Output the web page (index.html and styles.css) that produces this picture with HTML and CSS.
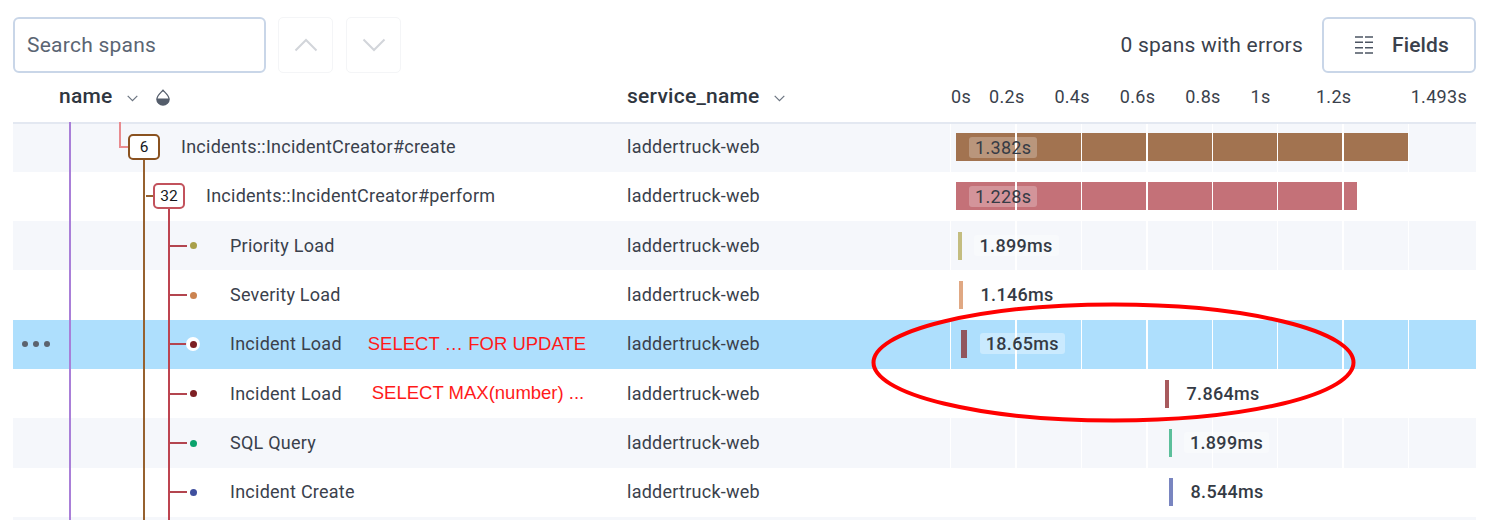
FILE: index.html
```html
<!DOCTYPE html>
<html lang="en">
<head>
<meta charset="utf-8">
<title>Trace spans</title>
<link rel="stylesheet" href="styles.css">
</head>
<body>
<div class="page">
  <div class="toolbar">
    <input class="search" type="text" placeholder="Search spans">
    <button class="nav-btn" aria-label="Previous"><svg width="24" height="14" viewBox="0 0 24 14"><path d="M1.5 12.5 12 2l10.500 10.500"/></svg></button>
    <button class="nav-btn" aria-label="Next"><svg width="24" height="14" viewBox="0 0 24 14"><path d="M1.500 1.500 12 12 22.500 1.500"/></svg></button>
    <span class="errors">0 spans with errors</span>
    <button class="fields-btn">
      <svg width="18" height="18" viewBox="0 0 18 18"><path d="M0 1h8M10 1h8M0 6.300h8M10 6.300h8M0 11.700h8M10 11.700h8M0 17h8M10 17h8"/></svg>
      <span>Fields</span>
    </button>
  </div>

  <div class="col-head">
    <div class="head-name">
      <span class="head-title">name</span>
      <svg class="sort" width="11" height="7" viewBox="0 0 11 7"><path d="M.7.8 5.500 5.600 10.300.8"/></svg>
      <svg class="drop" width="14" height="17" viewBox="0 0 14 17"><path class="drop-fill" d="M.8 9.500h12.400C13.400 13.500 10.500 16 7 16S.6 13.500.8 9.500z"/><path class="drop-line" d="M7 1.200C5 3.500.9 6.500.9 10.200.9 13.500 3.700 16 7 16s6.100-2.500 6.100-5.800C13.100 6.500 9 3.500 7 1.200z"/></svg>
    </div>
    <div class="head-service">
      <span class="head-title">service_name</span>
      <svg class="sort" width="11" height="7" viewBox="0 0 11 7"><path d="M.7.8 5.500 5.600 10.300.8"/></svg>
    </div>
    <div class="axis">
      <span>0s</span><span>0.2s</span><span>0.4s</span><span>0.6s</span><span>0.8s</span><span>1s</span><span>1.2s</span><span class="axis-end">1.493s</span>
    </div>
  </div>

  <div class="rows">
    <i class="guide guide-root"></i>
    <i class="guide guide-parent"></i>
    <i class="guide guide-brown"></i>
    <i class="guide guide-red"></i>

    <div class="row alt">
      <div class="name depth-0"><i class="stub stub-pink"></i><span class="count count-brown">6</span><span class="label label-group">Incidents::IncidentCreator#create</span></div>
      <div class="service">laddertruck-web</div>
      <div class="timeline"><div class="bar wide bar-brown" style="margin-left:6px;width:452px"><span class="chip">1.382s</span></div></div>
    </div>
    <div class="row">
      <div class="name depth-1"><i class="stub stub-brown"></i><span class="count count-red">32</span><span class="label label-group">Incidents::IncidentCreator#perform</span></div>
      <div class="service">laddertruck-web</div>
      <div class="timeline"><div class="bar wide bar-red" style="margin-left:6px;width:401px"><span class="chip">1.228s</span></div></div>
    </div>
    <div class="row alt">
      <div class="name depth-2"><i class="stub"></i><span class="dot-wrap"><i class="dot dot-olive"></i></span><span class="label">Priority Load</span></div>
      <div class="service">laddertruck-web</div>
      <div class="timeline"><div class="bar thin bar-olive" style="margin-left:8.300px"></div><span class="chip chip-time">1.899ms</span></div>
    </div>
    <div class="row">
      <div class="name depth-2"><i class="stub"></i><span class="dot-wrap"><i class="dot dot-orange"></i></span><span class="label">Severity Load</span></div>
      <div class="service">laddertruck-web</div>
      <div class="timeline"><div class="bar thin bar-orange" style="margin-left:9.300px"></div><span class="chip chip-time">1.146ms</span></div>
    </div>
    <div class="row selected">
      <div class="more"><i></i><i></i><i></i></div>
      <div class="name depth-2"><i class="stub"></i><span class="dot-wrap halo"><i class="dot dot-maroon"></i></span><span class="label">Incident Load</span><span class="note note-update">SELECT … FOR UPDATE</span></div>
      <div class="service">laddertruck-web</div>
      <div class="timeline"><div class="bar thick bar-maroon" style="margin-left:11px"></div><span class="chip chip-time">18.65ms</span></div>
    </div>
    <div class="row">
      <div class="name depth-2"><i class="stub"></i><span class="dot-wrap"><i class="dot dot-maroon"></i></span><span class="label">Incident Load</span><span class="note note-max">SELECT MAX(number) ...</span></div>
      <div class="service">laddertruck-web</div>
      <div class="timeline"><div class="bar thin bar-maroon-thin" style="margin-left:215.300px"></div><span class="chip chip-time">7.864ms</span></div>
    </div>
    <div class="row alt">
      <div class="name depth-2"><i class="stub"></i><span class="dot-wrap"><i class="dot dot-green"></i></span><span class="label">SQL Query</span></div>
      <div class="service">laddertruck-web</div>
      <div class="timeline"><div class="bar thin bar-green" style="margin-left:218.700px"></div><span class="chip chip-time">1.899ms</span></div>
    </div>
    <div class="row">
      <div class="name depth-2"><i class="stub"></i><span class="dot-wrap"><i class="dot dot-blue"></i></span><span class="label">Incident Create</span></div>
      <div class="service">laddertruck-web</div>
      <div class="timeline"><div class="bar thin bar-blue" style="margin-left:219.300px"></div><span class="chip chip-time">8.544ms</span></div>
    </div>
    <div class="row alt"></div>
  </div>

  <svg class="annotation" width="491" height="127" viewBox="0 0 491 127"><ellipse cx="245.500" cy="63.500" rx="240" ry="58"/></svg>
</div>
</body>
</html>
```
FILE: styles.css
```css
* { box-sizing: border-box; }
html, body { margin: 0; padding: 0; background: #fff; }
body { font-family: Roboto, "Liberation Sans", sans-serif; color: #3a414c; overflow: hidden; }
.page { position: relative; width: 1486px; height: 520px; overflow: hidden; display: flex; flex-direction: column; }

.toolbar { display: flex; align-items: center; height: 56px; margin: 17px 10px 0 13px; flex: none; }
.search { width: 253px; height: 56px; border: 2px solid #c9d6e8; border-radius: 6px; padding: 0 12px; font: 400 21px Roboto, sans-serif; letter-spacing: .25px; color: #3a414c; outline: none; background: #fff; }
.search::placeholder { color: #5b6573; opacity: 1; }
.nav-btn { width: 55px; height: 56px; margin-left: 12px; border: 1px solid #f4f5f7; border-radius: 5px; background: #fff; display: flex; align-items: center; justify-content: center; padding: 0; }
.nav-btn + .nav-btn { margin-left: 13px; }
.nav-btn svg path { fill: none; stroke: #d2d5da; stroke-width: 2; }
.errors { margin-left: auto; font-size: 21px; letter-spacing: .22px; color: #3a414c; }
.fields-btn { width: 154px; height: 56px; margin-left: 19px; border: 2px solid #c9d6e8; border-radius: 6px; background: #fff; display: flex; align-items: center; padding: 0 0 0 31px; gap: 19px; font: 500 21px Roboto, sans-serif; letter-spacing: .15px; color: #3a414c; }
.fields-btn svg path { fill: none; stroke: #4c5563; stroke-width: 1.600; }

.col-head { flex: none; height: 51px; margin: 0 10px -1.600px 13px; display: grid; grid-template-columns: 614px 323px 1fr; border-bottom: 2px solid #e3e8f1; position: relative; z-index: 1; }
.head-name { display: flex; align-items: center; padding-left: 46px; padding-bottom: 3px; }
.head-service { display: flex; align-items: center; padding-bottom: 3px; }
.head-title { font-size: 21px; font-weight: 500; letter-spacing: .25px; color: #2f3640; }
.sort { margin-left: 14px; margin-top: 4px; }
.sort path { fill: none; stroke: #6b7480; stroke-width: 1.200; }
.drop { margin-left: 18px; margin-top: 2px; }
.drop-fill { fill: #545d6b; }
.drop-line { fill: none; stroke: #545d6b; stroke-width: 1.300; }
.axis { display: grid; grid-template-columns: 38px repeat(6, 65.400px) 1fr; align-items: center; font-size: 18px; letter-spacing: .3px; color: #3a414c; padding: 0 0 3px 1px; }
.axis-end { text-align: right; padding-right: 9px; }

.rows { flex: 1; position: relative; margin: 0 10px 0 13px; }
.row { height: 49.330px; display: grid; grid-template-columns: 614px 323px 1fr; align-items: stretch; position: relative; font-size: 18px; letter-spacing: .25px; }
.row.alt { background: #f5f7fb; }
.row.selected { background: #aedffd; }

.guide { position: absolute; display: block; z-index: 2; }
.guide-root { left: 56px; top: 0; bottom: 0; width: 1.500px; background: #a97fd8; }
.guide-parent { left: 106px; top: 0; height: 25px; width: 1.500px; background: #e98b8f; }
.guide-brown { left: 130px; top: 38px; bottom: 0; width: 2px; background: #96612f; }
.guide-red { left: 155px; top: 87px; bottom: 0; width: 1.500px; background: #bd4450; }

.name { display: flex; align-items: center; min-width: 0; position: relative; z-index: 3; }
.depth-0 { padding-left: 106px; }
.depth-1 { padding-left: 133px; }
.depth-2 { padding-left: 157px; }
.stub { display: block; height: 2px; width: 17px; background: #b3454f; flex: none; }
.stub-pink { width: 9px; background: #e98b8f; }
.stub-brown { width: 7px; background: #96612f; }
.count { flex: none; width: 32px; height: 26px; border: 2px solid; border-radius: 5px; background: #fff; display: flex; align-items: center; justify-content: center; font-size: 15.500px; letter-spacing: 0; color: #16181c; }
.count-brown { border-color: #8a5220; }
.count-red { border-color: #c2525c; }
.dot-wrap { flex: none; width: 14px; height: 14px; margin-left: -1px; border-radius: 50%; display: flex; align-items: center; justify-content: center; }
.halo { background: #fff; }
.dot { display: block; width: 7px; height: 7px; border-radius: 50%; }
.dot-olive { background: #a9a04a; }
.dot-orange { background: #cb8350; }
.dot-maroon { background: #7d1f23; }
.dot-green { background: #0aa36c; }
.dot-blue { background: #3f4f9e; }
.label { margin-left: 30px; margin-bottom: 1px; color: #3a414c; white-space: nowrap; }
.label-group { margin-left: 21px; }
.note { color: #ff1a1a; font-family: "Liberation Sans", Arial, sans-serif; font-size: 18.500px; letter-spacing: 0; margin-bottom: 1px; white-space: nowrap; }
.note-update { margin-left: 26px; }
.note-max { margin-left: 30px; }

.service { display: flex; align-items: center; padding-bottom: 1px; color: #3a414c; }

.timeline { position: relative; display: flex; align-items: center; }
.timeline::after { content: ""; position: absolute; top: 0; bottom: 0; left: 0; width: 460px; pointer-events: none; background: repeating-linear-gradient(to right, #fff 0, #fff 1.500px, transparent 1.500px, transparent 65.400px); }
.bar { flex: none; height: 28px; }
.wide { display: flex; align-items: center; padding-left: 13px; }
.thin { width: 3.300px; }
.thick { width: 6.300px; }
.bar-brown { background: #a27350; }
.bar-red { background: #c47178; }
.bar-olive { background: #c4bd80; }
.bar-orange { background: #e0a883; }
.bar-maroon { background: #91565e; }
.bar-maroon-thin { background: #a85a5d; }
.bar-green { background: #5cbf9b; }
.bar-blue { background: #7985c0; }
.chip { position: relative; z-index: 1; display: inline-block; height: 21px; line-height: 21px; padding: 0 6px; border-radius: 3px; background: rgba(255,255,255,.25); font-size: 18px; letter-spacing: .3px; color: #353b45; white-space: nowrap; }
.chip-time { margin-left: 12px; margin-bottom: 1px; font-weight: 500; background: rgba(255,255,255,.35); }
.thick + .chip-time { margin-left: 12.500px; }

.more { position: absolute; left: 9px; top: 0; bottom: 0; display: flex; align-items: center; gap: 5px; z-index: 3; }
.more i { display: block; width: 6px; height: 6px; border-radius: 50%; background: #5c636e; }

.annotation { position: absolute; left: 868px; top: 299px; z-index: 5; pointer-events: none; }
.annotation ellipse { fill: none; stroke: #f00; stroke-width: 4; }
```
